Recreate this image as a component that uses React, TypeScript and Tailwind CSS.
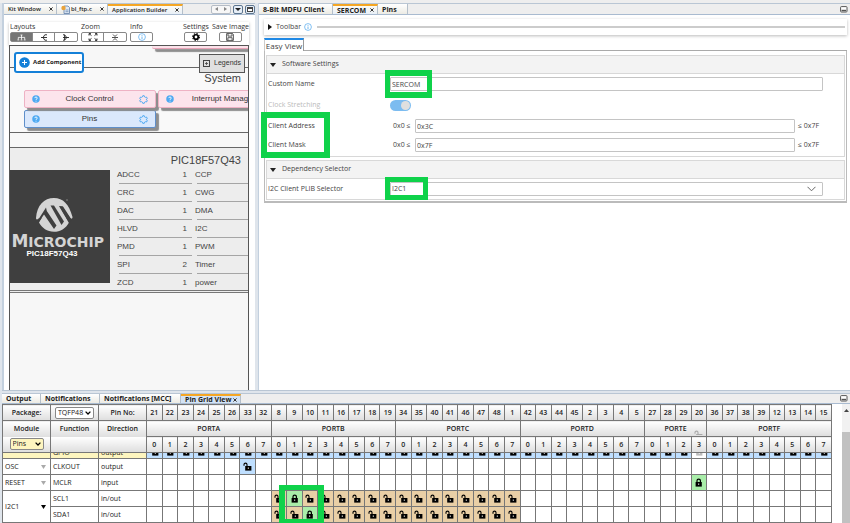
import type { ReactNode } from 'react';
import clsx from 'clsx';

interface TabItem {
  label: string;
  active?: boolean;
  closable?: boolean;
  file?: boolean;
  className: string;
}

const editorTabs: TabItem[] = [
  { label: 'Kit Window', closable: true, className: 'w-[53px] text-[6px] font-semibold' },
  { label: 'bl_ftp.c', closable: true, file: true, className: 'w-[51px] text-[6px] font-semibold' },
  { label: 'Application Builder', closable: true, active: true, className: 'w-[75px] text-[6px] font-semibold' },
];

const clientTabs: TabItem[] = [
  { label: '8-Bit MDFU Client', className: 'w-[74px] text-[7px] font-bold' },
  { label: 'SERCOM', active: true, closable: true, className: 'w-[45px] text-[7px] font-bold' },
  { label: 'Pins', className: 'w-[30px] text-[7px] font-bold' },
];

const outputTabs: TabItem[] = [
  { label: 'Output', className: 'w-[39px] text-[7px] font-bold' },
  { label: 'Notifications', className: 'w-[59px] text-[7px] font-bold' },
  { label: 'Notifications [MCC]', className: 'w-[81px] text-[7px] font-bold' },
  { label: 'Pin Grid View', active: true, closable: true, className: 'w-[60px] text-[7px] font-bold' },
];

const leftModules = [
  ['ADCC', 1],
  ['CRC', 1],
  ['DAC', 1],
  ['HLVD', 1],
  ['PMD', 1],
  ['SPI', 2],
  ['ZCD', 1],
];
const rightModules = ['CCP', 'CWG', 'DMA', 'I2C', 'PWM', 'Timer', 'power'];

const ports = [
  { name: 'PORTA', pins: [21, 22, 23, 24, 25, 26, 33, 32] },
  { name: 'PORTB', pins: [8, 9, 10, 11, 16, 17, 18, 19] },
  { name: 'PORTC', pins: [34, 35, 40, 41, 46, 47, 48, 1] },
  { name: 'PORTD', pins: [42, 43, 44, 45, 2, 3, 4, 5] },
  { name: 'PORTE', pins: [27, 28, 29, 20] },
  { name: 'PORTF', pins: [36, 37, 38, 39, 12, 13, 14, 15] },
];

const pins = ports.flatMap((port) => port.pins.map((pin, bit) => ({ pin, bit, port: port.name })));

const Mark = ({ className }: { className: string }) => (
  <div className={clsx('pointer-events-none absolute z-20 border-[#0fd24a]', className)} />
);

const Tabs = ({ items, children, compact }: { items: TabItem[]; children?: ReactNode; compact?: boolean }) => (
  <div
    className={clsx(
      'flex shrink-0 items-stretch border-t border-b border-t-[#b9c6d4] border-b-[#a9bbd0] bg-[#eeeeee]',
      compact ? 'h-[11px]' : 'h-[12px]',
    )}
  >
    {items.map((tab) => (
      <button
        key={tab.label}
        className={clsx(
          'flex shrink-0 items-center justify-between border-r border-[#b4bfca] pr-[3px] pl-[4px] leading-none whitespace-nowrap text-[#222]',
          tab.className,
          tab.active ? 'border-t-2 border-t-[#f5a623]' : 'bg-linear-to-b from-white to-[#ecebe4]',
          tab.active && (compact ? 'bg-[#d3e3f5]' : 'bg-linear-to-b from-[#fdfaf2] to-[#e9f0f8]'),
        )}
      >
        <span className="flex items-center gap-px">
          {tab.file && (
            <svg className="h-[9px] w-[9px]" viewBox="0 0 9 9">
              <path d="M3 1h4l1.500 1.500V8.500H3z" fill="#dfe9f5" stroke="#5f7fa8" strokeWidth=".8" />
              <path d="M4.500 5h3M4.500 6.700h3" stroke="#5f7fa8" strokeWidth=".7" />
              <circle cx="2.500" cy="3" r="2.200" fill="#e9a33c" />
            </svg>
          )}
          {tab.label}
        </span>
        {tab.closable && (
          <svg className="h-[4px] w-[4px]" viewBox="0 0 4 4" stroke="#333" strokeWidth="1">
            <path d="M.4.4l3.200 3.200M3.600.4L.4 3.600" />
          </svg>
        )}
      </button>
    ))}
    {children}
  </div>
);

const MinimizeButton = () => (
  <button aria-label="Minimize" className="mr-[2px] ml-auto flex items-center">
    <svg className="h-[7px] w-[8px]" viewBox="0 0 8 7">
      <rect x=".6" y=".6" width="6.400" height="5.400" rx=".8" fill="#fff" stroke="#555" />
      <path d="M1.500 4.500h4.600" stroke="#555" strokeWidth="1.400" />
    </svg>
  </button>
);

const InfoIcon = ({ className }: { className?: string }) => (
  <svg className={clsx('h-[8px] w-[8px]', className)} viewBox="0 0 16 16" fill="none" stroke="#4da6ee">
    <circle cx="8" cy="8" r="6.800" strokeWidth="1.400" />
    <path d="M8 7v5M8 4v1.600" strokeWidth="1.600" />
  </svg>
);

const HelpIcon = () => (
  <svg className="h-[8px] w-[8px]" viewBox="0 0 16 16" fill="none">
    <circle cx="8" cy="8" r="7.500" fill="#4da9f2" />
    <path d="M5.500 6.200C5.500 3.200 10.500 3.200 10.500 6.200C10.500 8 8 7.800 8 9.800M8 11.500v1.700" stroke="#fff" strokeWidth="1.800" />
  </svg>
);

const GearOutline = () => (
  <svg className="h-[9px] w-[9px]" viewBox="0 0 18 18" fill="none" stroke="#4da9f2">
    <path
      d="M7.500 1.500h3l.6 2.200 1.700 1 2.200-.6 1.500 2.600L15 8.300v1.600l1.500 1.500-1.500 2.600-2.200-.6-1.700 1-.6 2.200h-3l-.6-2.200-1.700-1-2.200.6-1.500-2.600L3 9.900V8.300L1.500 6.700 3 4.100l2.200.6 1.700-1z"
      strokeWidth="2"
    />
  </svg>
);

const Lock = ({ open, color = '#000' }: { open?: boolean; color?: string }) => (
  <svg className="h-[9px] w-[9px] shrink-0" viewBox="0 0 9 9" fill="none">
    {open ? (
      <path d="M1 3.800V2.600C1 .6 4 .6 4 2.600V4.200" stroke={color} strokeWidth="1.100" />
    ) : (
      <path d="M3 4.500V2.700C3 .5 6.400.5 6.400 2.700V4.500" stroke={color} strokeWidth="1.200" />
    )}
    <rect x={open ? 2.2 : 1.6} y="4" width="6.200" height="4.600" fill={color} />
    <path d={open ? 'M5.300 5.400v1.600' : 'M4.700 5.400v1.600'} stroke="#fff" strokeWidth=".8" />
  </svg>
);

const toolButton = 'flex h-[10px] w-[23px] items-center justify-center rounded-[2px] border border-[#888]';
const toolSegment = 'flex h-[8px] w-[22px] items-center justify-center';

const BuilderToolbar = () => (
  <div className="mt-[7px] mr-[6px] ml-[5px] flex h-[23px] gap-[3px] bg-white pl-px text-[7px] leading-[10px] text-[#333] shadow-[0_1px_3px_#bbbbbb]">
    <div>
      <div>Layouts</div>
      <div className="flex divide-x divide-[#888] rounded-[2px] border border-[#888] bg-white">
        <button aria-label="Vertical tree" className={clsx(toolSegment, 'bg-[#757575]')}>
          <svg className="h-[7px] w-[9px]" viewBox="0 0 9 7" stroke="#fff" fill="none" strokeWidth=".8">
            <path d="M4.500 1v4.500M1.300 5.500V3.400h6.400v2.100M3.500 1h2M.4 5.900h1.800M3.600 5.900h1.800M6.800 5.900h1.800" />
          </svg>
        </button>
        <button aria-label="Left tree" className={toolSegment}>
          <svg className="h-[7px] w-[8px]" viewBox="0 0 8 7" stroke="#222" fill="none" strokeWidth=".9">
            <path d="M1 3.500h6M7 .8H4.800L3 3.500l1.800 2.700H7" />
          </svg>
        </button>
        <button aria-label="Right tree" className={toolSegment}>
          <svg className="h-[7px] w-[8px]" viewBox="0 0 8 7" stroke="#222" fill="none" strokeWidth=".9">
            <path d="M7 3.500H1M1 .8h1.600L4.800 3.500 2.600 6.200H1M2.600.8v5.400" />
          </svg>
        </button>
      </div>
    </div>
    <div>
      <div>Zoom</div>
      <div className="flex divide-x divide-[#888] rounded-[2px] border border-[#888]">
        <button aria-label="Zoom to fit" className={toolSegment}>
          <svg className="h-[8px] w-[10px]" viewBox="0 0 10 8" stroke="#222" fill="none" strokeWidth=".9">
            <path d="M1 2.500V.6h2M7 .6h2v1.900M9 5.500v1.900H7M3 7.400H1V5.500M1 .6l2.500 2M9 .6l-2.500 2M9 7.400l-2.500-2M1 7.400l2.500-2" />
          </svg>
        </button>
        <button aria-label="Collapse" className={toolSegment}>
          <svg className="h-[7px] w-[8px]" viewBox="0 0 8 7" stroke="#222" fill="none" strokeWidth=".8">
            <path d="M1 3.500h6M2 .5l2 2 2-2M2 6.500l2-2 2 2" />
          </svg>
        </button>
      </div>
    </div>
    <div>
      <div>Info</div>
      <button aria-label="Info" className={toolButton}>
        <InfoIcon />
      </button>
    </div>
    <div className="ml-auto flex flex-col items-center">
      <div>Settings</div>
      <button aria-label="Settings" className={toolButton}>
        <svg className="h-[8px] w-[8px]" viewBox="0 0 16 16" fill="none" stroke="#000">
          <circle cx="8" cy="8" r="4.500" strokeWidth="3.400" />
          <circle cx="8" cy="8" r="6.800" strokeWidth="2.200" strokeDasharray="2.800 2.540" />
        </svg>
      </button>
    </div>
    <div className="flex flex-col items-center whitespace-nowrap">
      <div>Save Image</div>
      <button aria-label="Save Image" className={toolButton}>
        <svg className="h-[8px] w-[8px]" viewBox="0 0 8 8" fill="none" stroke="#333" strokeWidth=".8">
          <path d="M.6.6h6l.8.8v6H.6zM2 .6v2.500h4V.6M1.900 7.400V4.700h4.200v2.700" />
        </svg>
      </button>
    </div>
  </div>
);

const ComponentCard = ({ label, className }: { label: string; className: string }) => (
  <div
    className={clsx(
      'flex h-[18px] w-[132px] shrink-0 items-center justify-between rounded-[2px] border px-[7px] text-[8px] leading-none text-[#333] shadow-[3px_3px_1px_#8e8e8e]',
      className,
    )}
  >
    <HelpIcon />
    <span>{label}</span>
    <GearOutline />
  </div>
);

const Chip = () => (
  <div className="flex h-[113px] w-[100px] shrink-0 flex-col overflow-hidden bg-[#3f3f3f] text-white">
    <svg className="mt-[27px] ml-[25px] h-[36px] w-[38px] shrink-0" viewBox="0 0 38 36">
      <path
        d="M1 21C2 8 9 1 19 1C28 1 34 7 37.500 20C37.500 22 36 22 35 21L27.500 9.500L24.500 9.500L34 25.500C31 31.500 25 34.800 19 34.800C12 34.800 7 31 4 25.500L7 20.500L3.500 21.500C2 23 1 22.500 1 21z"
        fill="#d4d4d4"
      />
      <path d="M11 10.500L4 21.500L3.500 25.500L9 17.500L19 32L21.500 28.500L11.800 14z" fill="#3f3f3f" />
      <path d="M15.500 8.500L19 8.500L29 24.500L26.500 28z" fill="#3f3f3f" />
      <path d="M24 9L28 9.500L36.500 22.500L34 26z" fill="#3f3f3f" />
      <circle cx="32" cy="3" r=".7" fill="#999" />
    </svg>
    <div className="mr-[6px] flex h-[16px] items-baseline self-end font-['DejaVu_Sans',sans-serif] text-[14px] leading-[16px] font-bold text-[#d4d4d4]">
      <span className="text-[17px]">M</span>ICROCHIP
    </div>
    <div className="pr-[16px] text-center text-[8px] leading-[10px] font-bold">PIC18F57Q43</div>
  </div>
);

const ApplicationBuilder = () => (
  <section className="flex w-[253px] shrink-0 flex-col border-l-2 border-[#c3d0de] bg-white">
    <Tabs items={editorTabs}>
      <div className="ml-auto flex items-center gap-[2px]">
        <div className="flex h-[9px] w-[20px] items-center justify-around rounded-[2px] border border-[#b5bcc5] bg-[#f7f7f7]">
          <button aria-label="Scroll left" className="h-0 w-0 border-y-2 border-r-3 border-y-transparent border-r-[#888]" />
          <button aria-label="Scroll right" className="h-0 w-0 border-y-2 border-l-3 border-y-transparent border-l-[#888]" />
        </div>
        <button aria-label="Tab list" className="flex h-[9px] w-[10px] items-center justify-center rounded-[2px] border border-[#5d7690] bg-[#e6eef7]">
          <svg className="h-[3px] w-[6px]" viewBox="0 0 6 3">
            <path d="M0 0h6L3 3z" fill="#222" />
          </svg>
        </button>
        <button aria-label="Maximize" className="flex h-[9px] w-[10px] items-center justify-center rounded-[2px] border border-[#5d7690] bg-[#e6eef7]">
          <span className="h-[5px] w-[6px] border border-t-2 border-[#444] bg-white" />
        </button>
      </div>
    </Tabs>
    <BuilderToolbar />
    <div className="relative mr-[6px] ml-[5px] flex-1 overflow-hidden border border-b-0 border-[#555] bg-[#f7f7f7] font-['Liberation_Sans',sans-serif] text-[#444]">
      <button className="absolute top-[6px] left-[4px] z-10 flex h-[21px] w-[70px] items-center gap-[3px] rounded-[3px] border-2 border-[#1480d8] bg-white pl-[3px] font-['Open_Sans',sans-serif] text-[6px] font-bold whitespace-nowrap text-[#222]">
        <svg className="h-[11px] w-[11px] shrink-0" viewBox="0 0 11 11">
          <circle cx="5.500" cy="5.500" r="5.300" fill="#1480d8" />
          <path d="M3 5.500h5M5.500 3v5" stroke="#fff" />
        </svg>
        Add Component
      </button>
      <button className="absolute top-[8px] right-[3px] z-10 flex h-[19px] w-[46px] items-center justify-center gap-[4px] border border-[#555] bg-[#e0e0e0] text-[7px] text-[#333]">
        <svg className="h-[7px] w-[7px]" viewBox="0 0 7 7" fill="none" stroke="#444">
          <rect x=".5" y=".5" width="6" height="6" />
          <path d="M2 3.500h3M3.500 2v3" strokeWidth=".8" />
        </svg>
        Legends
      </button>
      <div className="h-[22px] border-b border-[#666]">
        <div className="ml-[142px] h-[3px] rounded-bl-[2px] border-b border-[#e8a3b8] bg-[#fbe3ea] shadow-[3px_3px_1px_#8e8e8e]" />
      </div>
      <div className="h-[65px] border-b border-[#666] bg-[#f9f9f9]">
        <h2 className="pt-[4px] pr-[7px] text-right text-[11px] leading-[13px]">System</h2>
        <div className="mt-[5px] ml-[14px] flex gap-[2px]">
          <ComponentCard label="Clock Control" className="border-[#eeb2c4] bg-[#fce4ec]" />
          <ComponentCard label="Interrupt Manager" className="border-[#eeb2c4] bg-[#fce4ec]" />
        </div>
        <div className="mt-[2px] ml-[14px]">
          <ComponentCard label="Pins" className="border-[#5f8fca] bg-[#dae8fc]" />
        </div>
      </div>
      <div className="mt-[14px] h-[146px] overflow-hidden border-t border-b-3 border-double border-[#777] border-t-[#666] bg-[#ededed]">
        <h2 className="pt-[6px] pr-[7px] text-right text-[11px] leading-[13px]">PIC18F57Q43</h2>
        <div className="flex text-[8px]">
          <div className="mt-[3px]">
            <Chip />
          </div>
          <ul className="ml-[7px] w-[75px] shrink-0">
            {leftModules.map(([name, count]) => (
              <li key={name} className="h-[18px]">
                <div className="flex h-[16px] items-center justify-between pr-[5px]">
                  <span>{name}</span>
                  <span>{count}</span>
                </div>
                <div className="ml-[2px] h-px bg-[#a5a5a5]" />
              </li>
            ))}
          </ul>
          <ul className="ml-[3px] flex-1">
            {rightModules.map((name) => (
              <li key={name} className="h-[18px]">
                <div className="flex h-[16px] items-center">{name}</div>
                <div className="ml-[2px] h-px bg-[#a5a5a5]" />
              </li>
            ))}
          </ul>
        </div>
      </div>
    </div>
  </section>
);

const GroupHeader = ({ children }: { children: ReactNode }) => (
  <button className="flex h-[18px] w-full items-center gap-[6px] border-b border-[#d8d8d8] bg-[#f3f3f3] pl-[3px]">
    <svg className="h-[4px] w-[6px]" viewBox="0 0 6 4">
      <path d="M0 0h6L3 4z" fill="#222" />
    </svg>
    {children}
  </button>
);

const fieldLabel = 'w-[122px] shrink-0';
const inputStyle = 'h-[14px] min-w-0 flex-1 rounded-[1px] border border-[#c4c4c4] bg-white px-px outline-none';

const SercomPanel = () => (
  <section className="flex min-w-0 flex-1 flex-col border-l border-[#c3d0de] bg-white text-[#444]">
    <Tabs items={clientTabs}>
      <MinimizeButton />
    </Tabs>
    <div className="mt-[4px] mr-[3px] ml-[5px] flex h-[16px] items-center gap-[3px] pr-[2px] pl-[4px] text-[7px] shadow-[0_1px_3px_#bbbbbb]">
      <button className="flex items-center gap-[4px]">
        <svg className="h-[6px] w-[4px]" viewBox="0 0 4 6">
          <path d="M0 0v6l4-3z" fill="#111" />
        </svg>
        Toolbar
      </button>
      <InfoIcon />
      <div className="ml-[2px] h-[2px] flex-1 bg-[#cccccc]" />
    </div>
    <div className="mt-[3px] mr-[3px] ml-[5px] flex">
      <button className="h-[13px] w-[40px] border-t-2 border-r border-l border-t-[#1e88e5] border-r-[#999] border-l-[#ccc] text-[8px] leading-[10px] whitespace-nowrap">
        Easy View
      </button>
      <div className="flex-1 border-b border-[#aaa]" />
    </div>
    <div className="mr-[3px] ml-[5px] border-r border-b-2 border-l border-[#bbb] p-px pt-[4px] text-[7px]">
      <div className="border border-[#d8d8d8] pb-[4px]">
        <GroupHeader>Software Settings</GroupHeader>
        <div className="mt-[3px] mr-[21px] flex h-[14px] items-center pl-px">
          <label htmlFor="custom-name" className={fieldLabel}>Custom Name</label>
          <div className="relative flex flex-1">
            <input id="custom-name" defaultValue="SERCOM" className={inputStyle} />
            <Mark className="-top-[7px] -left-[5px] h-[28px] w-[47px] border-x-[5px] border-y-[6px]" />
          </div>
        </div>
        <div className="mt-[7px] flex h-[14px] items-center pl-px text-[#bbb]">
          <label htmlFor="clock-stretching" className={fieldLabel}>Clock Stretching</label>
          <input
            id="clock-stretching"
            type="checkbox"
            defaultChecked
            disabled
            className="h-[11px] w-[21px] appearance-none rounded-full bg-[#7cbcf0] before:ml-[11px] before:mt-px before:block before:h-[9px] before:w-[9px] before:rounded-full before:bg-[#dfdfdf]"
          />
        </div>
        <div className="relative mt-[7px] mr-[23px] flex h-[14px] items-center pl-px">
          <label htmlFor="client-address" className={fieldLabel}>Client Address</label>
          <span className="w-[25px] pl-[3px] whitespace-nowrap">0x0 ≤</span>
          <input id="client-address" defaultValue="0x3C" className={inputStyle} />
          <span className="ml-[3px] w-[23px] whitespace-nowrap">≤ 0x7F</span>
          <Mark className="-top-[7px] -left-[6px] h-[46px] w-[69px] border-[6px]" />
        </div>
        <div className="mt-[5px] mr-[23px] flex h-[14px] items-center pl-px">
          <label htmlFor="client-mask" className={fieldLabel}>Client Mask</label>
          <span className="w-[25px] pl-[3px] whitespace-nowrap">0x0 ≤</span>
          <input id="client-mask" defaultValue="0x7F" className={inputStyle} />
          <span className="ml-[3px] w-[23px] whitespace-nowrap">≤ 0x7F</span>
        </div>
      </div>
      <div className="mt-[3px] border border-[#d8d8d8] pb-[3px]">
        <GroupHeader>Dependency Selector</GroupHeader>
        <div className="mt-[3px] mr-[21px] flex h-[14px] items-center pl-px">
          <label htmlFor="plib" className={fieldLabel}>I2C Client PLIB Selector</label>
          <div className="relative flex flex-1">
            <select id="plib" className={clsx(inputStyle, 'appearance-none')}>
              <option>I2C1</option>
            </select>
            <svg className="pointer-events-none absolute top-[4px] right-[7px] h-[6px] w-[9px]" viewBox="0 0 9 6" fill="none" stroke="#666">
              <path d="M.5.8l4 4 4-4" />
            </svg>
            <Mark className="-top-[5px] -left-[5px] h-[23px] w-[43px] border-[5px]" />
          </div>
        </div>
      </div>
    </div>
  </section>
);

interface PinRow {
  module?: string;
  span?: number;
  fn: string;
  dir: string;
  armed?: boolean;
  cell: (port: string, bit: number) => 'none' | 'blue' | 'tan' | 'locked';
}

const onBC = (port: string) => port === 'PORTB' || port === 'PORTC';

const pinRows: PinRow[] = [
  { module: 'OSC', fn: 'CLKOUT', dir: 'output', cell: (p, b) => (p === 'PORTA' && b === 6 ? 'blue' : 'none') },
  { module: 'RESET', fn: 'MCLR', dir: 'input', cell: (p, b) => (p === 'PORTE' && b === 3 ? 'locked' : 'none') },
  {
    module: 'I2C1',
    span: 2,
    armed: true,
    fn: 'SCL1',
    dir: 'in/out',
    cell: (p, b) => (p === 'PORTB' && b === 1 ? 'locked' : onBC(p) ? 'tan' : 'none'),
  },
  { fn: 'SDA1', dir: 'in/out', cell: (p, b) => (p === 'PORTB' && b === 2 ? 'locked' : onBC(p) ? 'tan' : 'none') },
];

const cellColors = { none: 'bg-white', blue: 'bg-[#bfdfff]', tan: 'bg-[#e9cfa6]', locked: 'bg-[#a9eda9]' };
const headCell = 'h-[16px] border border-[#777] bg-linear-to-b from-white to-[#dedede] p-0 text-center font-semibold';
const bodyCell = 'h-[16px] border border-[#777] p-0 pl-[2px] text-left';

const SelectArrow = () => (
  <svg className="pointer-events-none absolute top-[4px] right-[3px] h-[4px] w-[6px]" viewBox="0 0 6 4" fill="none" stroke="#000">
    <path d="M.6.6L3 3 5.400.6" strokeWidth="1.300" />
  </svg>
);

const smallSelect = 'block h-[12px] w-full appearance-none rounded-[2px] border border-[#888] pl-[2px] text-[7px] leading-[10px] font-normal';

const PinGrid = () => (
  <table className="w-full table-fixed border-collapse text-[7px] leading-[10px] text-[#222]">
    <colgroup>
      <col className="w-[48px]" />
      <col className="w-[48px]" />
      <col className="w-[48px]" />
      {pins.map((p) => (
        <col key={p.port + p.bit} />
      ))}
    </colgroup>
    <thead>
      <tr>
        <th className={headCell}><label htmlFor="package">Package:</label></th>
        <th className={headCell}>
          <div className="relative mx-auto w-[39px]">
            <select id="package" className={clsx(smallSelect, 'bg-white')}>
              <option>TQFP48</option>
            </select>
            <SelectArrow />
          </div>
        </th>
        <th className={headCell}>Pin No:</th>
        {pins.map((p) => (
          <th key={p.pin} className={headCell}>{p.pin}</th>
        ))}
      </tr>
      <tr>
        <th className={clsx(headCell, 'border-b-0')}>Module</th>
        <th className={clsx(headCell, 'border-b-0')}>Function</th>
        <th className={clsx(headCell, 'border-b-0')}>Direction</th>
        {ports.map((port) => (
          <th key={port.name} colSpan={port.pins.length} className={headCell}>
            <div className="relative">
              {port.name}
              {port.name === 'PORTE' && (
                <div className="absolute top-[6px] right-[3px] h-[5px] overflow-hidden">
                  <Lock open color="#aaa" />
                </div>
              )}
            </div>
          </th>
        ))}
      </tr>
      <tr>
        <th className={clsx(headCell, 'border-t-0')}>
          <div className="relative mx-auto w-[34px]">
            <select aria-label="Module filter" className={clsx(smallSelect, 'bg-[#fdf5bf]')}>
              <option>Pins</option>
            </select>
            <SelectArrow />
          </div>
        </th>
        <th className={clsx(headCell, 'border-t-0')} />
        <th className={clsx(headCell, 'border-t-0')} />
        {pins.map((p) => (
          <th key={p.pin} className={headCell}>{p.bit}</th>
        ))}
      </tr>
    </thead>
    <tbody>
      {/* GPIO row is scrolled halfway under the header */}
      <tr>
        {['', 'GPIO', 'output'].map((text, i) => (
          <td key={i} className="h-[6px] border border-[#777] bg-[#fdf5bf] p-0 pl-[2px]">
            <div className="flex h-[5px] items-end overflow-hidden">{text}</div>
          </td>
        ))}
        {pins.map((p) => (
          <td key={p.pin} className={clsx('h-[6px] border border-[#777] p-0', p.pin === 20 ? 'bg-white' : 'bg-[#bfdfff]')}>
            <div className="flex h-[5px] items-end justify-center overflow-hidden pb-[2px]">
              <div className="flex h-[3px] items-end overflow-hidden">
                <Lock open color={p.pin === 20 ? '#bbb' : '#000'} />
              </div>
            </div>
          </td>
        ))}
      </tr>
      {pinRows.map((row) => (
        <tr key={row.fn}>
          {row.module && (
            <td className={bodyCell} rowSpan={row.span}>
              <div className="flex items-center justify-between pr-[4px]">
                {row.module}
                <svg className="h-[4px] w-[5px]" viewBox="0 0 5 4">
                  <path d="M0 0h5L2.500 4z" fill={row.armed ? '#000' : '#aaa'} />
                </svg>
              </div>
            </td>
          )}
          <td className={bodyCell}>{row.fn}</td>
          <td className={bodyCell}>{row.dir}</td>
          {pins.map((p) => {
            const state = row.cell(p.port, p.bit);
            return (
              <td key={p.pin} className={clsx('h-[16px] border border-[#777] p-0', cellColors[state])}>
                <div className="relative flex justify-center">
                  {state !== 'none' && <Lock open={state !== 'locked'} />}
                  {row.fn === 'SCL1' && p.pin === 9 && <Mark className="-top-[9px] -left-[8px] h-[39px] w-[45px] border-x-[6px] border-y-[5px]" />}
                </div>
              </td>
            );
          })}
        </tr>
      ))}
      <tr>
        <td className={bodyCell} />
        <td className={bodyCell} />
        <td className={bodyCell} />
        {pins.map((p) => (
          <td key={p.pin} className={clsx('h-[16px] border border-[#777] p-0', p.pin === 20 ? 'bg-white' : 'bg-[#e9cfa6]')} />
        ))}
      </tr>
    </tbody>
  </table>
);

export default function App() {
  return (
    <div className="flex h-screen flex-col overflow-hidden bg-[#dfe5ec] font-['Open_Sans',sans-serif]">
      <div className="h-[3px] shrink-0 bg-[#eeeeee]" />
      <main className="ml-[2px] flex min-h-0 flex-1 gap-[3px] border-b border-[#b9c6d4]">
        <ApplicationBuilder />
        <SercomPanel />
      </main>
      <section className="mt-[2px] ml-[2px] flex h-[130px] shrink-0 flex-col bg-white">
        <Tabs items={outputTabs} compact>
          <MinimizeButton />
        </Tabs>
        <div className="flex min-h-0 flex-1">
          <div className="min-w-0 flex-1 overflow-hidden">
            <PinGrid />
          </div>
          <div className="ml-[10px] flex w-[8px] shrink-0 flex-col items-center bg-[#f1f1f1]">
            <svg className="mt-[5px] h-[3px] w-[5px]" viewBox="0 0 5 3">
              <path d="M0 3h5L2.500 0z" fill="#444" />
            </svg>
            <div className="mt-[20px] w-full flex-1 bg-[#c1c1c1]" />
          </div>
        </div>
      </section>
    </div>
  );
}
